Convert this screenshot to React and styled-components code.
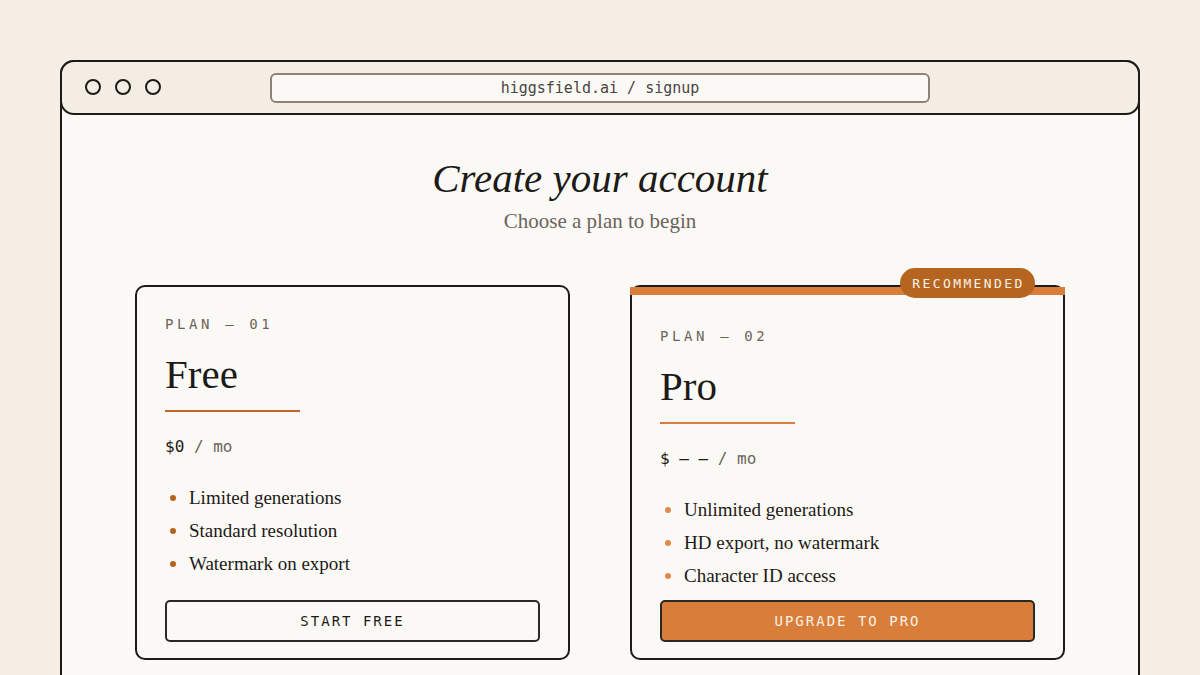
import styled, { createGlobalStyle } from 'styled-components'

const serif = `"Liberation Serif", "Times New Roman", serif`
const mono = `"DejaVu Sans Mono", "Liberation Mono", monospace`

const GlobalStyle = createGlobalStyle`
    html, body {
        margin: 0;
        padding: 0;
        height: 675px;
        overflow: hidden;
        background: #f4eee5;
    }
    * { box-sizing: border-box; }
`

const plans = [
    {
        label: 'PLAN — 01',
        name: 'Free',
        price: '$0',
        features: ['Limited generations', 'Standard resolution', 'Watermark on export'],
        cta: 'START FREE',
        featured: false,
    },
    {
        label: 'PLAN — 02',
        name: 'Pro',
        price: '$ – –',
        features: ['Unlimited generations', 'HD export, no watermark', 'Character ID access'],
        cta: 'UPGRADE TO PRO',
        featured: true,
    },
]

function PlanCard({ plan }) {
    const { featured } = plan
    return <Card $featured={featured}>
        {featured && <Badge>RECOMMENDED</Badge>}
        <PlanLabel>{plan.label}</PlanLabel>
        <PlanName>{plan.name}</PlanName>
        <Rule $featured={featured} />
        <Price>{plan.price} <span>/ mo</span></Price>
        <Features>
            {plan.features.map(f => <Feature key={f} $featured={featured}>{f}</Feature>)}
        </Features>
        <CtaButton $featured={featured}>{plan.cta}</CtaButton>
    </Card>
}

function App() {
    return <Page>
        <GlobalStyle />
        <Window>
            <TitleBar>
                <Dots>
                    <Dot />
                    <Dot />
                    <Dot />
                </Dots>
                <UrlBar>higgsfield.ai / signup</UrlBar>
            </TitleBar>
            <Content>
                <Heading>Create your account</Heading>
                <Subheading>Choose a plan to begin</Subheading>
                <Cards>
                    {plans.map(p => <PlanCard key={p.name} plan={p} />)}
                </Cards>
            </Content>
        </Window>
    </Page>
}

export default App

const Page = styled.div`
    padding: 60px 60px 0;
    height: 675px;
    overflow: hidden;
`

const Window = styled.div`
    width: 1080px;
    min-height: 680px;
    border: 2px solid #1d1a17;
    border-radius: 14px 14px 0 0;
    background: #fbf9f5;
`

const TitleBar = styled.div`
    position: relative;
    display: flex;
    align-items: center;
    justify-content: center;
    height: 55px;
    margin: -2px -2px 0;
    border: 2px solid #1d1a17;
    border-radius: 14px;
    background: #f4ede3;
`

const Dots = styled.div`
    position: absolute;
    left: 23px;
    top: 17px;
    display: flex;
    gap: 14px;
`

const Dot = styled.span`
    width: 16px;
    height: 16px;
    border: 2px solid #1d1a17;
    border-radius: 50%;
`

const UrlBar = styled.div`
    width: 660px;
    height: 30px;
    display: flex;
    align-items: center;
    justify-content: center;
    border: 2px solid #8b8477;
    border-radius: 6px;
    background: #fbf9f5;
    font-family: ${mono};
    font-size: 15px;
    color: #4a453f;
`

const Content = styled.div`
    display: flex;
    flex-direction: column;
    align-items: center;
    padding-top: 38px;
`

const Heading = styled.h1`
    margin: 0;
    font-family: ${serif};
    font-style: italic;
    font-weight: 400;
    font-size: 41px;
    line-height: 50px;
    color: #1d1a17;
`

const Subheading = styled.p`
    margin: 5px 0 0;
    font-family: ${serif};
    font-size: 21px;
    line-height: 26px;
    color: #6b645b;
`

const Cards = styled.div`
    display: grid;
    grid-template-columns: 435px 435px;
    gap: 60px;
    margin-top: 51px;
`

const Card = styled.div`
    position: relative;
    display: flex;
    flex-direction: column;
    padding: ${p => p.$featured ? '40px' : '28px'} 28px 16px;
    border: 2px solid #1d1a17;
    border-radius: 10px;
    background: #fbf9f5;
    ${p => p.$featured && `
        &::before {
            content: '';
            position: absolute;
            top: 0;
            left: -2px;
            right: -2px;
            height: 8px;
            background: #d97d3a;
        }
    `}
`

const Badge = styled.div`
    position: absolute;
    top: -19px;
    right: 28px;
    z-index: 1;
    width: 135px;
    height: 30px;
    display: flex;
    align-items: center;
    justify-content: center;
    border-radius: 15px;
    background: #b5651f;
    color: #fbf3ea;
    font-family: ${mono};
    font-size: 13px;
    letter-spacing: 2.4px;
    padding-left: 2px;
`

const PlanLabel = styled.div`
    font-family: ${mono};
    font-size: 14px;
    line-height: 18px;
    letter-spacing: 3.6px;
    color: #6b645b;
`

const PlanName = styled.h2`
    margin: 17px 0 0;
    font-family: ${serif};
    font-weight: 400;
    font-size: 41px;
    line-height: 48px;
    color: #1d1a17;
`

const Rule = styled.div`
    width: 135px;
    height: 2px;
    margin-top: 12px;
    background: ${p => p.$featured ? '#d97d3a' : '#c0672a'};
`

const Price = styled.div`
    margin-top: 25px;
    font-family: ${mono};
    font-size: 16px;
    line-height: 20px;
    color: #1d1a17;
    span { color: #6b645b; }
`

const Features = styled.ul`
    list-style: none;
    margin: 24px 0 8px;
    padding: 0;
`

const Feature = styled.li`
    position: relative;
    padding-left: 24px;
    font-family: ${serif};
    font-size: 19px;
    line-height: 33px;
    color: #1d1a17;
    &::before {
        content: '';
        position: absolute;
        left: 5px;
        top: 14px;
        width: 6px;
        height: 6px;
        border-radius: 50%;
        background: ${p => p.$featured ? '#e08a4a' : '#b8621f'};
    }
`

const CtaButton = styled.button`
    margin-top: auto;
    height: 42px;
    width: 100%;
    border: 2px solid #2b2825;
    border-radius: 5px;
    background: ${p => p.$featured ? '#d97d3a' : 'transparent'};
    color: ${p => p.$featured ? '#fbf0e4' : '#1d1a17'};
    font-family: ${mono};
    font-size: 14px;
    letter-spacing: 2px;
    cursor: pointer;
`
